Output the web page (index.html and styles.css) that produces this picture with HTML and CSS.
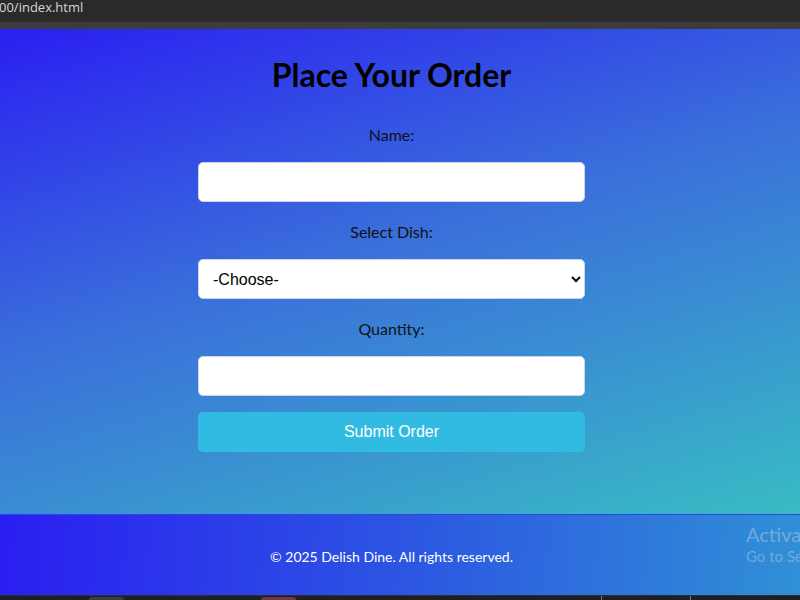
FILE: index.html
```html
<!DOCTYPE html>
<html lang="en">
<head>
<meta charset="utf-8">
<title>Place Your Order - Delish Dine</title>
<link rel="stylesheet" href="styles.css">
</head>
<body>
<div class="chrome">
  <span class="url">00/index.html</span>
</div>
<main class="main">
  <div class="content">
    <h1 class="title">Place Your Order</h1>
    <form class="order-form">
      <label class="field-label" for="name">Name:</label>
      <input class="field" id="name" type="text">
      <label class="field-label" for="dish">Select Dish:</label>
      <select class="field select" id="dish">
        <option>-Choose-</option>
        <option>Pasta</option>
        <option>Pizza</option>
      </select>
      <label class="field-label" for="qty">Quantity:</label>
      <input class="field last" id="qty" type="number">
      <button class="submit" type="button">Submit Order</button>
    </form>
  </div>
</main>
<footer class="footer">
  <p class="copy">© 2025 Delish Dine. All rights reserved.</p>
  <div class="watermark">
    <div class="wm-title">Activate Windows</div>
    <div class="wm-sub">Go to Settings to activate Windows.</div>
  </div>
</footer>
<div class="taskbar">
  <span class="tb-icon tb-gray"></span>
  <span class="tb-icon tb-pink"></span>
  <span class="tb-sep tb-sep1"></span>
  <span class="tb-sep tb-sep2"></span>
</div>
</body>
</html>
```

FILE: styles.css
```css
* {
  box-sizing: border-box;
}

html, body {
  margin: 0;
  padding: 0;
  width: 800px;
  height: 600px;
  overflow: hidden;
}

body {
  font-family: Lato, "Noto Sans", sans-serif;
  background: #1c1f24;
}

.chrome {
  height: 29px;
  background: #2b2929;
  border-bottom: 7px solid #3c3c3c;
  display: flex;
  align-items: flex-start;
}

.url {
  font-family: "Open Sans", "Noto Sans", sans-serif;
  font-size: 13px;
  line-height: 14px;
  color: #d6d6d6;
  margin-left: -1px;
}

.main {
  height: 485px;
  background: linear-gradient(163deg, #2a1ff2 0%, #3a6fdb 45%, #38bcc4 100%);
  display: flex;
  justify-content: flex-start;
}

.content {
  width: 783px;
  display: flex;
  flex-direction: column;
  align-items: center;
}

.title {
  margin: 27px 0 0;
  font-size: 32px;
  line-height: 38px;
  font-weight: 700;
  color: #000;
}

.order-form {
  width: 387px;
  margin-top: 31px;
  display: flex;
  flex-direction: column;
  align-items: stretch;
}

.field-label {
  display: block;
  text-align: center;
  font-size: 16px;
  line-height: 20px;
  color: #111;
  margin-bottom: 17px;
}

.field {
  height: 40px;
  padding: 10px;
  border: 1px solid #cfd3e6;
  border-radius: 5px;
  background: #fff;
  font-family: "Liberation Sans", Arial, sans-serif;
  font-size: 16px;
  color: #000;
  margin: 0 0 20px;
  outline: none;
}

.select {
  padding: 0 6px 0 10px;
}

.field.last {
  margin-bottom: 16px;
}

.submit {
  height: 40px;
  border: none;
  border-radius: 5px;
  background: #32bbe2;
  color: #fff;
  font-family: "Liberation Sans", Arial, sans-serif;
  font-size: 16px;
  cursor: pointer;
}

.footer {
  position: relative;
  height: 81px;
  background: linear-gradient(95deg, #2a1ef2 0%, #2c55e2 50%, #3090d6 100%);
  border-top: 1px solid #3340ee;
  display: flex;
  justify-content: flex-start;
  align-items: center;
  overflow: hidden;
}

.copy {
  width: 783px;
  margin: 0;
  padding-top: 2px;
  text-align: center;
  font-size: 14px;
  color: #fff;
}

.watermark {
  position: absolute;
  left: 746px;
  top: 6px;
  white-space: nowrap;
  font-family: Lato, "Noto Sans", sans-serif;
  color: rgba(200, 210, 225, 0.45);
}

.wm-title {
  font-size: 20px;
  line-height: 26px;
}

.wm-sub {
  font-size: 15px;
  line-height: 18px;
  margin-top: 0;
}

.taskbar {
  position: relative;
  height: 5px;
  background: #1c1f24;
  border-top: 1px solid #2e2e2e;
}

.tb-icon {
  position: absolute;
  top: 1px;
  height: 4px;
  width: 35px;
  border-radius: 3px 3px 0 0;
}

.tb-gray {
  left: 89px;
  background: #3a3d42;
}

.tb-pink {
  left: 261px;
  background: #6a3a48;
}

.tb-sep {
  position: absolute;
  top: 0;
  width: 1px;
  height: 5px;
  background: #777;
}

.tb-sep1 {
  left: 601px;
}

.tb-sep2 {
  left: 690px;
}
```
